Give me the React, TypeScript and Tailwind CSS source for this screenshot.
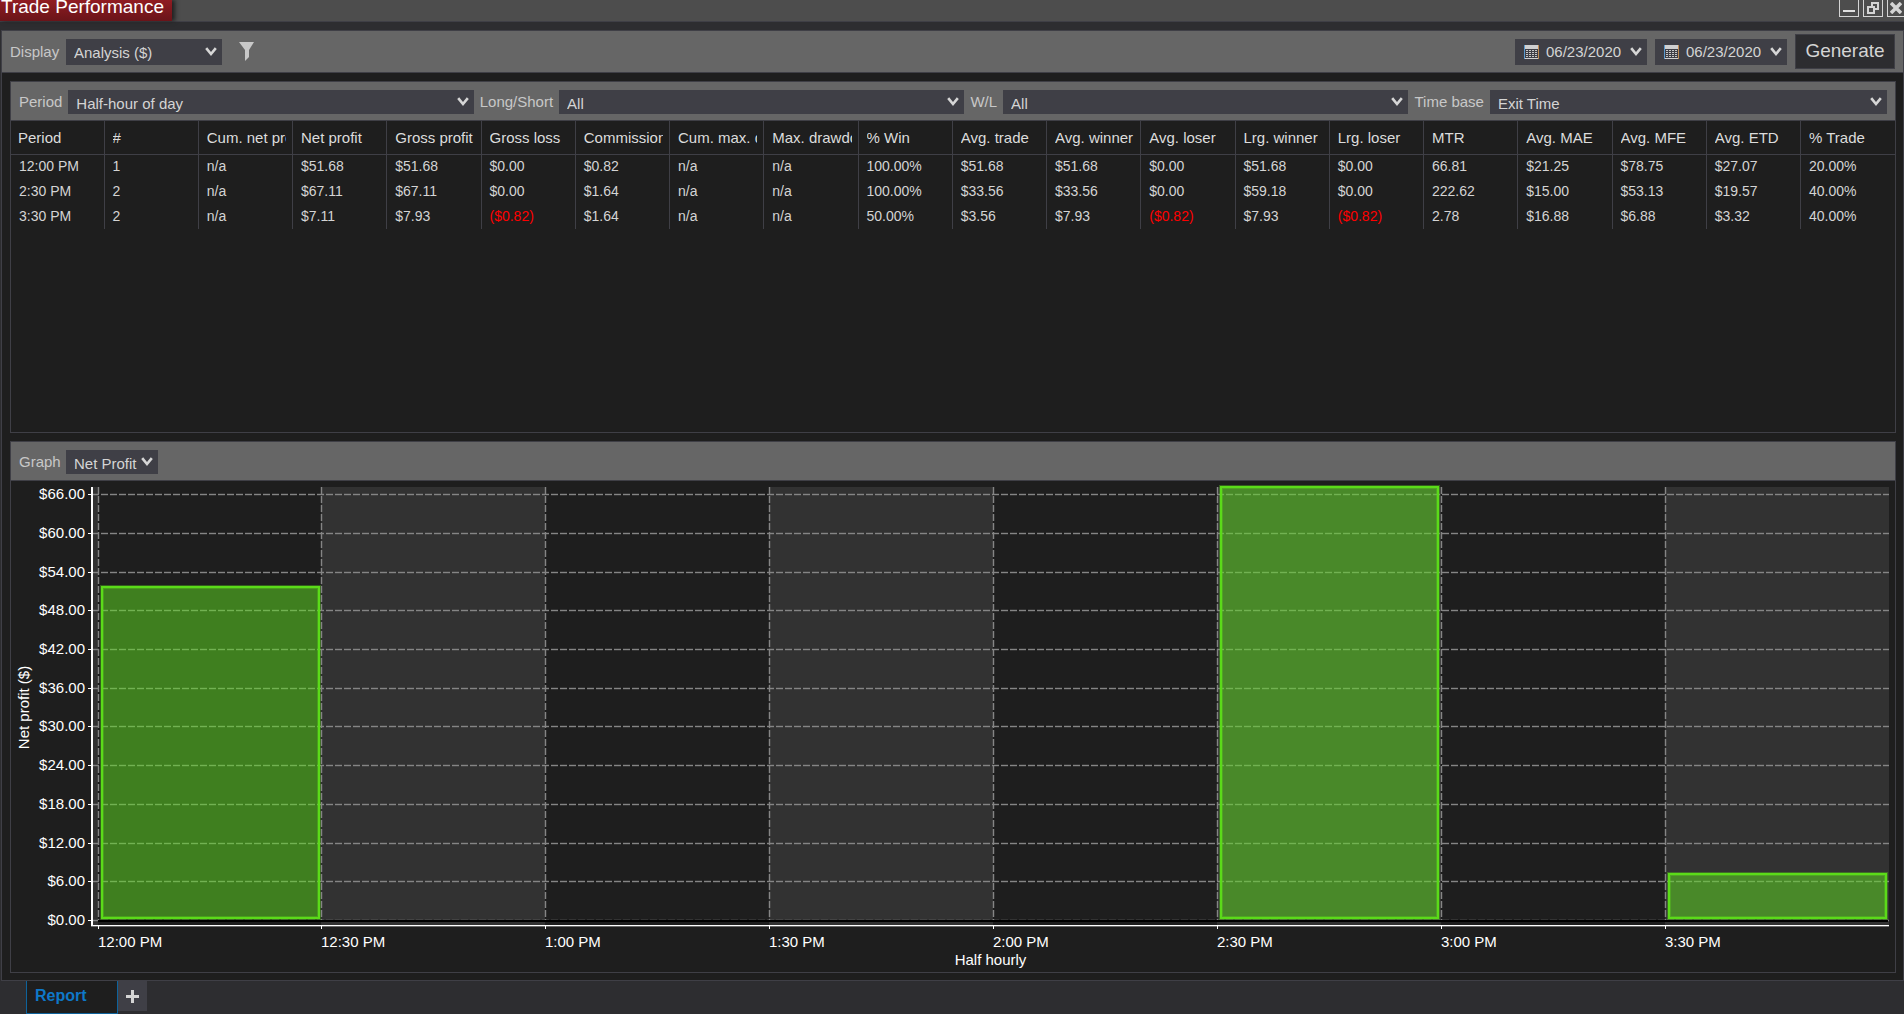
import { useEffect, useRef, useState } from 'react';

const filters = [
  { id: 'period', label: 'Period', options: ['Half-hour of day', 'Hour of day', 'Day of week'], last: false },
  { id: 'side', label: 'Long/Short', options: ['All', 'Long', 'Short'], last: false },
  { id: 'result', label: 'W/L', options: ['All', 'Winners', 'Losers'], last: false },
  { id: 'base', label: 'Time base', options: ['Exit Time', 'Entry Time'], last: true },
];

const columns = [
  'Period', '#', 'Cum. net profit', 'Net profit', 'Gross profit', 'Gross loss', 'Commission',
  'Cum. max. drawdown', 'Max. drawdown', '% Win', 'Avg. trade', 'Avg. winner', 'Avg. loser',
  'Lrg. winner', 'Lrg. loser', 'MTR', 'Avg. MAE', 'Avg. MFE', 'Avg. ETD', '% Trade',
];

const rows = [
  ['12:00 PM', '1', 'n/a', '$51.68', '$51.68', '$0.00', '$0.82', 'n/a', 'n/a', '100.00%', '$51.68', '$51.68', '$0.00', '$51.68', '$0.00', '66.81', '$21.25', '$78.75', '$27.07', '20.00%'],
  ['2:30 PM', '2', 'n/a', '$67.11', '$67.11', '$0.00', '$1.64', 'n/a', 'n/a', '100.00%', '$33.56', '$33.56', '$0.00', '$59.18', '$0.00', '222.62', '$15.00', '$53.13', '$19.57', '40.00%'],
  ['3:30 PM', '2', 'n/a', '$7.11', '$7.93', '($0.82)', '$1.64', 'n/a', 'n/a', '50.00%', '$3.56', '$7.93', '($0.82)', '$7.93', '($0.82)', '2.78', '$16.88', '$6.88', '$3.32', '40.00%'],
];

const slots = [
  { time: '12:00 PM', profit: 51.68 },
  { time: '12:30 PM', profit: 0 },
  { time: '1:00 PM', profit: 0 },
  { time: '1:30 PM', profit: 0 },
  { time: '2:00 PM', profit: 0 },
  { time: '2:30 PM', profit: 67.11 },
  { time: '3:00 PM', profit: 0 },
  { time: '3:30 PM', profit: 7.11 },
];

const yTicks = [0, 6, 12, 18, 24, 30, 36, 42, 48, 54, 60, 66];
const maxProfit = 67.11;

function Chevron() {
  return (
    <svg viewBox="0 0 12 10" className="pointer-events-none absolute top-1/2 right-[5px] h-[10px] w-3 -translate-y-1/2" fill="none">
      <path d="M1.2 1.2 L6 7 L10.8 1.2" stroke="#d6d6d6" strokeWidth="2.6" />
    </svg>
  );
}

function Dropdown({ id, options, className }: { id: string; options: string[]; className: string }) {
  return (
    <div className={`relative ${className}`}>
      <select id={id} className="h-full w-full appearance-none bg-[#3f3f46] pt-[3px] pl-2 text-[#d4d4d4] outline-none">
        {options.map((option) => (
          <option key={option}>{option}</option>
        ))}
      </select>
      <Chevron />
    </div>
  );
}

function DateButton({ label }: { label: string }) {
  return (
    <button aria-label={label} className="relative flex h-[26px] w-[132px] items-center gap-[7px] bg-[#3f3f46] pl-[9px] text-[#d4d4d4]">
      <svg viewBox="0 0 15 14" className="h-[14px] w-[15px]" shapeRendering="crispEdges">
        <rect width="15" height="14" fill="#d0d0d0" />
        <rect x="1" y="4" width="13" height="9" fill="#3f3f46" />
        <path d="M2 5.5h11M2 7.5h11M2 9.5h11M2 11.5h11" stroke="#c8c8c8" strokeDasharray="2 1" />
        <path d="M0.5 0v14" stroke="#5b9bd0" />
        <path d="M14.5 0v14" stroke="#c08a50" />
      </svg>
      <span className="pt-[2px]">06/23/2020</span>
      <Chevron />
    </button>
  );
}

function ProfitChart() {
  const ref = useRef<HTMLDivElement>(null);
  const [size, setSize] = useState({ width: 0, height: 0 });

  useEffect(() => {
    const el = ref.current;
    if (!el) return;
    const measure = () => setSize({ width: el.clientWidth, height: el.clientHeight });
    measure();
    const observer = new ResizeObserver(measure);
    observer.observe(el);
    return () => observer.disconnect();
  }, []);

  const { width, height } = size;
  const axisX = 81;
  const left = 87;
  const right = width - 6;
  const top = 6;
  const zero = height - 52;
  const axisY = zero + 5;
  const step = (right - left) / slots.length;
  const slotX = (i: number) => Math.floor(left + step * i);
  const valueY = (v: number) => Math.round(zero - (v / maxProfit) * (zero - top));

  const gridLines = (
    <>
      {yTicks.map((v) => (
        <line key={v} x1={axisX} x2={right} y1={valueY(v) + 0.5} y2={valueY(v) + 0.5} />
      ))}
      {slots.map((slot, i) => (
        <line key={slot.time} x1={slotX(i) + 0.5} x2={slotX(i) + 0.5} y1={top} y2={zero} />
      ))}
    </>
  );

  return (
    <div ref={ref} className="relative min-h-0 flex-1">
      {width > 0 && (
        <svg className="absolute inset-0 h-full w-full" fontSize="15" fill="#ffffff">
          {/* Alternating bands */}
          <rect x={axisX} y={top} width={left - axisX} height={axisY - top} fill="#323232" />
          {slots.map((slot, i) => (
            <rect
              key={slot.time}
              x={slotX(i)}
              y={top}
              width={slotX(i + 1) - slotX(i)}
              height={axisY - top}
              fill={i % 2 ? '#323232' : '#1e1e1e'}
            />
          ))}

          {/* Grid, with a soft edge under each dash */}
          <g stroke="#858585" strokeOpacity="0.2" strokeWidth="3" strokeDasharray="7 2" shapeRendering="crispEdges">{gridLines}</g>
          <g stroke="#858585" strokeDasharray="7 2" shapeRendering="crispEdges">{gridLines}</g>
          <rect x={left} y={zero} width={right - left - 1} height="2" fill="#000000" />

          {/* Bars */}
          {slots.map((slot, i) =>
            slot.profit > 0 ? (
              <g key={slot.time} stroke="#5bdb19" fill="none">
                <rect
                  x={slotX(i) + 4}
                  y={valueY(slot.profit)}
                  width={Math.round(step) - 7}
                  height={zero - 2 - valueY(slot.profit)}
                  fill="#5fdf1f"
                  fillOpacity="0.5"
                  strokeOpacity="0.35"
                  strokeWidth="4"
                />
                <rect
                  x={slotX(i) + 4}
                  y={valueY(slot.profit)}
                  width={Math.round(step) - 7}
                  height={zero - 2 - valueY(slot.profit)}
                  strokeWidth="2"
                />
              </g>
            ) : null
          )}

          {/* Axes */}
          <rect x={axisX - 1} y={top} width="2" height={axisY - top + 2} />
          <rect x={axisX - 1} y={axisY} width={right - axisX + 1} height="1" />
          <rect x={axisX - 1} y={axisY + 1} width={right - axisX + 1} height="1" fill="#6a6a6a" />
          {yTicks.map((v) => (
            <g key={v}>
              <rect x={axisX - 4} y={valueY(v)} width="4" height="1" />
              <text x={axisX - 7} y={valueY(v) + 5} textAnchor="end">${v.toFixed(2)}</text>
            </g>
          ))}
          {slots.map((slot, i) => (
            <g key={slot.time}>
              <rect x={slotX(i)} y={axisY} width="1" height="4" />
              <text x={slotX(i)} y={axisY + 22}>{slot.time}</text>
            </g>
          ))}
          <text x={(axisX + right) / 2} y={axisY + 40} textAnchor="middle">Half hourly</text>
          <text transform={`translate(18 ${(top + zero) / 2 + 4}) rotate(-90)`} textAnchor="middle">Net profit ($)</text>
        </svg>
      )}
    </div>
  );
}

export default function App() {
  return (
    <div className="flex h-screen flex-col overflow-hidden bg-[#2d2d30] font-['Liberation_Sans',Arial,sans-serif] text-[15px] text-[#d4d4d4]">
      {/* Title bar */}
      <header className="flex h-[22px] shrink-0 justify-between border-b border-[#3f3f46] bg-[#4d4d4d]">
        <h1 className="flex h-[21px] w-[172px] items-end bg-linear-to-b from-[#901c22] to-[#6a1419] pb-[5px] pl-px text-[19px] leading-[19px] whitespace-nowrap text-white shadow-[3px_0_4px_#222222]">
          Trade Performance
        </h1>
        <div className="flex h-[17px] gap-1">
          <button aria-label="Minimize" className="flex w-5 items-end justify-center border border-t-0 border-[#d4d4d4] pb-1">
            <span className="h-[2px] w-3 bg-[#e0e0e0]" />
          </button>
          <button aria-label="Restore" className="flex w-5 items-center justify-center border border-t-0 border-[#d4d4d4]">
            <svg viewBox="0 0 12 12" className="h-3 w-3" fill="none" stroke="#d4d4d4" strokeWidth="2">
              <path d="M5 4V1h6v6H8M1 5h6v6H1z" />
            </svg>
          </button>
          <button aria-label="Close" className="flex w-[17px] items-center justify-center border border-t-0 border-r-0 border-[#d4d4d4]">
            <svg viewBox="0 0 12 12" className="h-3 w-3" stroke="#d4d4d4" strokeWidth="3.5">
              <path d="M1 1l10 10M11 1L1 11" />
            </svg>
          </button>
        </div>
      </header>

      <main className="mt-2 ml-px flex min-h-0 flex-1 flex-col border border-[#3f3f46] bg-[#1e1e1e]">
        {/* Report toolbar */}
        <div className="flex h-[42px] shrink-0 items-center border-b border-[#3f3f46] bg-[#666666] pr-2 pl-2">
          <label htmlFor="display" className="w-14 pt-px text-[#c8c8c8]">Display</label>
          <Dropdown id="display" options={['Analysis ($)', 'Summary', 'Trades']} className="h-[26px] w-[156px]" />
          <button aria-label="Filter" className="ml-[17px]">
            <svg viewBox="0 0 15 19" className="h-[19px] w-[15px]" fill="#c8c8c8">
              <path d="M0 0h15L10 8v7l-4 4V8z" />
            </svg>
          </button>
          <div className="ml-auto flex items-center gap-2">
            <DateButton label="Start date" />
            <DateButton label="End date" />
            <button className="h-[35px] w-[100px] border border-[#3f3f46] bg-[#2d2d30] text-[19px]">Generate</button>
          </div>
        </div>

        <div className="flex min-h-0 flex-1 flex-col gap-2 pt-2 pr-[7px] pb-[7px] pl-2">
          {/* Analysis table */}
          <section className="h-[352px] shrink-0 border border-[#3f3f46]">
            <div className="flex h-[39px] items-center gap-[6px] border-b border-[#3f3f46] bg-[#666666] px-2 pt-[2px]">
              {filters.map((filter) => (
                <div key={filter.id} className={filter.last ? 'flex flex-1 items-center gap-[6px]' : 'contents'}>
                  <label htmlFor={filter.id} className="whitespace-nowrap text-[#c8c8c8]">{filter.label}</label>
                  <Dropdown id={filter.id} options={filter.options} className={filter.last ? 'h-6 flex-1' : 'h-6 w-[21.7%]'} />
                </div>
              ))}
            </div>
            <table className="w-full table-fixed border-collapse text-left text-[14px]">
              <thead>
                <tr className="h-[33px] border-b border-[#3f3f46] text-[15px] text-[#dcdcdc]">
                  {columns.map((column) => (
                    <th key={column} className="border-r border-[#3f3f46] pt-px pr-[6px] pb-0 pl-2 font-normal first:w-[93px] first:pl-[7px] last:border-r-0">
                      <div className="overflow-hidden whitespace-nowrap">{column}</div>
                    </th>
                  ))}
                </tr>
              </thead>
              <tbody>
                {rows.map((row) => (
                  <tr key={row[0]} className="h-[25px]">
                    {row.map((cell, i) => (
                      <td key={columns[i]} className={`border-r border-[#3f3f46] p-0 pl-2 last:border-r-0 ${cell.startsWith('(') ? 'text-[#ff0000]' : ''}`}>
                        {cell}
                      </td>
                    ))}
                  </tr>
                ))}
              </tbody>
            </table>
          </section>

          {/* Graph */}
          <section className="flex min-h-0 flex-1 flex-col border border-[#3f3f46]">
            <div className="flex h-[39px] shrink-0 items-center border-b border-[#3f3f46] bg-[#666666] pt-[2px] pl-2">
              <label htmlFor="graph" className="w-[47px] text-[#c8c8c8]">Graph</label>
              <Dropdown id="graph" options={['Net Profit', 'Commission']} className="h-6 w-[92px]" />
            </div>
            <ProfitChart />
          </section>
        </div>
      </main>

      {/* Report tabs */}
      <footer className="flex h-[33px] shrink-0 items-start pl-[26px]">
        <button className="h-[33px] w-[92px] border border-t-0 border-[#0e639c] bg-[#1e1e1e] pb-[2px] pl-2 text-left text-[16px] font-bold text-[#0e78c8]">Report</button>
        <button aria-label="New tab" className="flex h-[30px] w-[29px] items-center justify-center bg-[#3f3f46]">
          <svg viewBox="0 0 13 13" className="h-[13px] w-[13px]" stroke="#d4d4d4" strokeWidth="3">
            <path d="M6.5 0v13M0 6.5h13" />
          </svg>
        </button>
      </footer>
    </div>
  );
}
